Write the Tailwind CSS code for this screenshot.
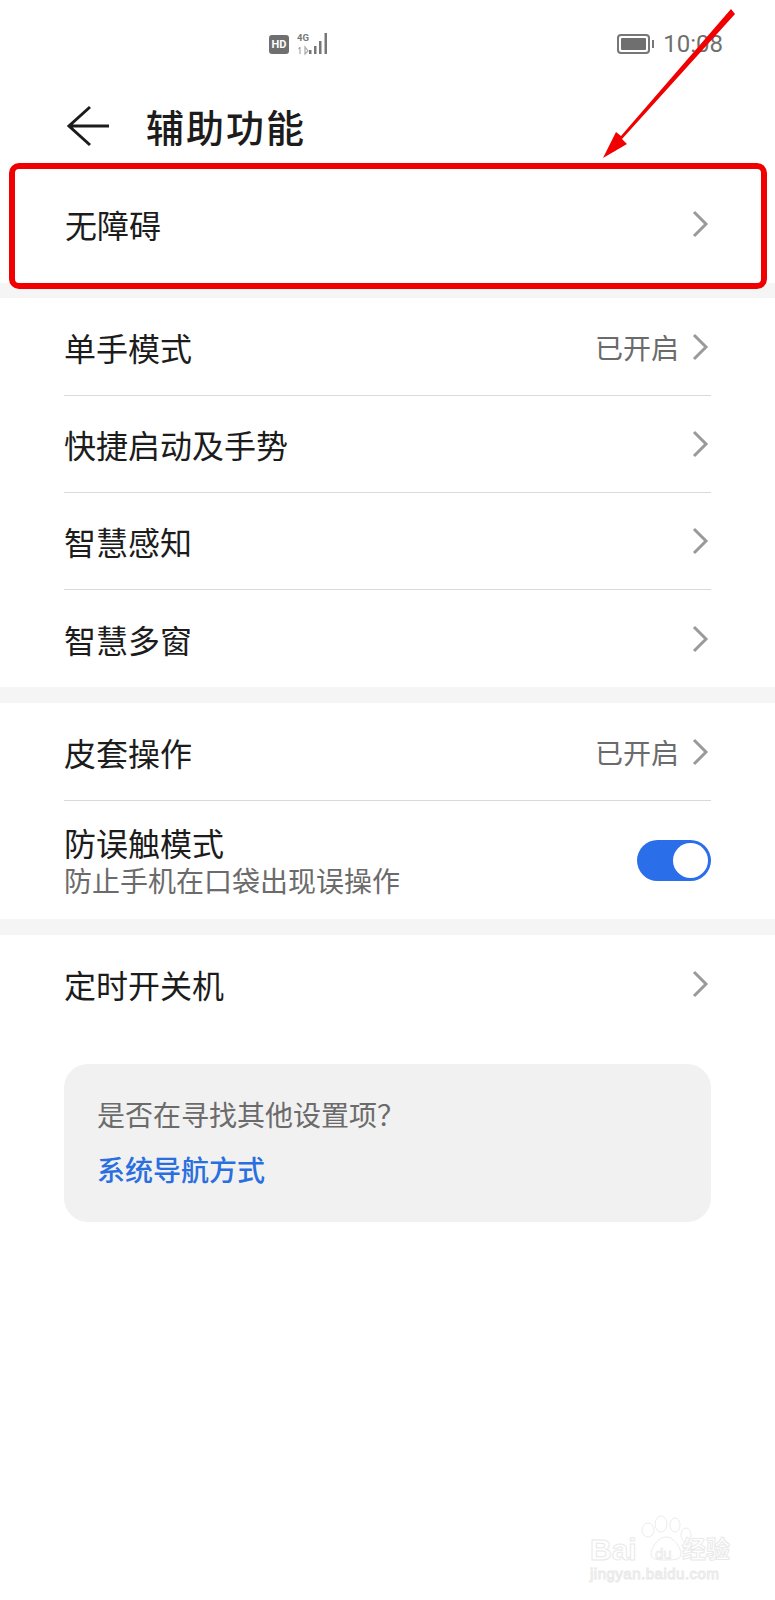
<!DOCTYPE html>
<html lang="zh-CN">
<head>
  <meta charset="UTF-8" />
  <meta name="viewport" content="width=device-width, initial-scale=1.0"/>
  <title>辅助功能</title>
  <script src="https://cdn.jsdelivr.net/npm/@tailwindcss/browser@4"></script>
</head>
<body class="bg-white">
  <div class="relative w-[775px] h-[1600px] overflow-hidden bg-white text-[#1c1c1c] font-['Noto_Sans_CJK_SC','Noto_Sans',sans-serif]">

    <!-- status bar -->
    <div class="h-[88px] relative flex items-center pl-[269px] pr-[52px] text-[#6f6f6f]">
      <div class="w-[20px] h-[19px] rounded-[3px] bg-[#6f6f6f] flex items-center justify-center text-white text-[11px] leading-none font-bold font-['Roboto',sans-serif]">HD</div>
      <div class="ml-[8px] w-[32px] h-[24px]">
        <svg width="32" height="24" viewBox="0 0 32 24" fill="none">
          <text x="0" y="9" font-family="Roboto" font-size="9.5" font-weight="700" fill="#777">4G</text>
          <path d="M3 15v7M1.5 17l1.5-2M8 15v7l3-3z" stroke="#aaa" stroke-width="1.2"/>
          <rect x="12" y="18" width="2.5" height="4" fill="#777"/>
          <rect x="17" y="14" width="2.5" height="8" fill="#777"/>
          <rect x="22" y="9" width="2.5" height="13" fill="#777"/>
          <rect x="27.5" y="1" width="2.5" height="21" fill="#777"/>
        </svg>
      </div>
      <div class="ml-auto flex items-center">
        <div class="w-[33px] h-[20px] rounded-[4px] border-2 border-[#777] p-[2px]">
          <div class="w-full h-full bg-[#6f6f6f] rounded-[1px]"></div>
        </div>
        <div class="w-[2px] h-[8px] ml-[2px] bg-[#777]"></div>
        <div class="ml-[9px] text-[24px] leading-none font-['Roboto',sans-serif]">10:08</div>
      </div>
    </div>

    <!-- header -->
    <div class="h-[76px] flex items-center pl-[66px]">
      <svg width="44" height="44" viewBox="0 0 44 44" fill="none" stroke="#1c1c1c" stroke-width="3">
        <path d="M24 3 3 22l21 19M3 22h40"/>
      </svg>
      <h1 class="ml-[36px] text-[38px] tracking-[2px] font-medium leading-none">辅助功能</h1>
    </div>

    <!-- 无障碍 -->
    <a class="h-[119px] flex items-center justify-between pl-[65px] pr-[66px]">
      <span class="text-[32px] leading-none">无障碍</span>
      <svg width="18" height="28" viewBox="0 0 18 28" fill="none" stroke="#9a9a9a" stroke-width="3"><path d="M3 2l12 12L3 26"/></svg>
    </a>
    <div class="h-[15px] bg-[#f5f5f5]"></div>

    <!-- group 1 -->
    <div class="mx-[64px]">
      <div class="h-[98px] flex items-center justify-between border-b border-[#d9d9d9] pr-[2px]">
        <span class="text-[32px] leading-none">单手模式</span>
        <div class="flex items-center gap-[12px]">
          <span class="text-[28px] leading-none text-[#6b6b6b]">已开启</span>
          <svg width="18" height="28" viewBox="0 0 18 28" fill="none" stroke="#9a9a9a" stroke-width="3"><path d="M3 2l12 12L3 26"/></svg>
        </div>
      </div>
      <div class="h-[97px] flex items-center justify-between border-b border-[#d9d9d9] pr-[2px]">
        <span class="text-[32px] leading-none">快捷启动及手势</span>
        <svg width="18" height="28" viewBox="0 0 18 28" fill="none" stroke="#9a9a9a" stroke-width="3"><path d="M3 2l12 12L3 26"/></svg>
      </div>
      <div class="h-[97px] flex items-center justify-between border-b border-[#d9d9d9] pr-[2px]">
        <span class="text-[32px] leading-none">智慧感知</span>
        <svg width="18" height="28" viewBox="0 0 18 28" fill="none" stroke="#9a9a9a" stroke-width="3"><path d="M3 2l12 12L3 26"/></svg>
      </div>
      <div class="h-[97px] flex items-center justify-between pr-[2px]">
        <span class="text-[32px] leading-none">智慧多窗</span>
        <svg width="18" height="28" viewBox="0 0 18 28" fill="none" stroke="#9a9a9a" stroke-width="3"><path d="M3 2l12 12L3 26"/></svg>
      </div>
    </div>
    <div class="h-[16px] bg-[#f5f5f5]"></div>

    <!-- group 2 -->
    <div class="mx-[64px]">
      <div class="h-[98px] flex items-center justify-between border-b border-[#d9d9d9] pr-[2px]">
        <span class="text-[32px] leading-none">皮套操作</span>
        <div class="flex items-center gap-[12px]">
          <span class="text-[28px] leading-none text-[#6b6b6b]">已开启</span>
          <svg width="18" height="28" viewBox="0 0 18 28" fill="none" stroke="#9a9a9a" stroke-width="3"><path d="M3 2l12 12L3 26"/></svg>
        </div>
      </div>
      <div class="h-[118px] flex items-center justify-between">
        <div>
          <div class="text-[32px] leading-[40px]">防误触模式</div>
          <div class="text-[28px] leading-[36px] text-[#6b6b6b]">防止手机在口袋出现误操作</div>
        </div>
        <div class="w-[74px] h-[41px] rounded-full bg-[#2a6eea] flex items-center justify-end pr-[3px]">
          <div class="w-[35px] h-[35px] rounded-full bg-white"></div>
        </div>
      </div>
    </div>
    <div class="h-[16px] bg-[#f5f5f5]"></div>

    <!-- group 3 -->
    <div class="mx-[64px]">
      <div class="h-[98px] flex items-center justify-between pr-[2px]">
        <span class="text-[32px] leading-none">定时开关机</span>
        <svg width="18" height="28" viewBox="0 0 18 28" fill="none" stroke="#9a9a9a" stroke-width="3"><path d="M3 2l12 12L3 26"/></svg>
      </div>
      <div class="mt-[31px] h-[158px] rounded-[24px] bg-[#f1f1f1] pl-[33px] pt-[29px]">
        <div class="text-[28px] leading-[42px] text-[#6b6b6b]">是否在寻找其他设置项？</div>
        <div class="mt-[13px] text-[28px] leading-[42px] font-medium text-[#2a6fdf]">系统导航方式</div>
      </div>
    </div>

    <!-- annotation: red box + arrow -->
    <div class="absolute left-[9px] top-[163px] w-[758px] h-[126px] border-[6px] border-[#f00000] rounded-[10px]"></div>
    <svg class="absolute left-0 top-0" width="775" height="170" viewBox="0 0 775 170" fill="#f00000">
      <path d="M731 9l4 5-113 125 5 5-24 14 13-26 5 4z"/>
    </svg>

    <!-- watermark -->
    <div class="absolute left-[590px] top-[1515px] w-[160px] h-[70px] text-white [-webkit-text-stroke:1px_#e9e9e9]">
      <svg class="absolute left-[47px] top-0" width="60" height="50" viewBox="0 0 60 50" fill="#fff" stroke="#ececec" stroke-width="1">
        <ellipse cx="11" cy="15" rx="6" ry="7"/>
        <ellipse cx="24" cy="9" rx="6" ry="8"/>
        <ellipse cx="38" cy="10" rx="5" ry="7"/>
        <ellipse cx="49" cy="20" rx="5" ry="7"/>
        <path d="M29 22c8 0 15 11 15 17 0 6-8 6-15 6s-15 0-15-6c0-6 7-17 15-17z"/>
      </svg>
      <span class="absolute left-0 top-[20px] text-[30px] leading-none font-bold font-['Liberation_Sans',sans-serif]">Bai</span>
      <span class="absolute left-[65px] top-[31px] text-[15px] leading-none [-webkit-text-stroke:0.6px_#e4e4e4] font-['Liberation_Sans',sans-serif]">du</span>
      <span class="absolute left-[92px] top-[21px] text-[24px] leading-none font-bold">经验</span>
      <span class="absolute left-0 top-[51px] text-[15px] tracking-[0.5px] leading-none font-['Liberation_Sans',sans-serif]">jingyan.baidu.com</span>
    </div>
  </div>
</body>
</html>
